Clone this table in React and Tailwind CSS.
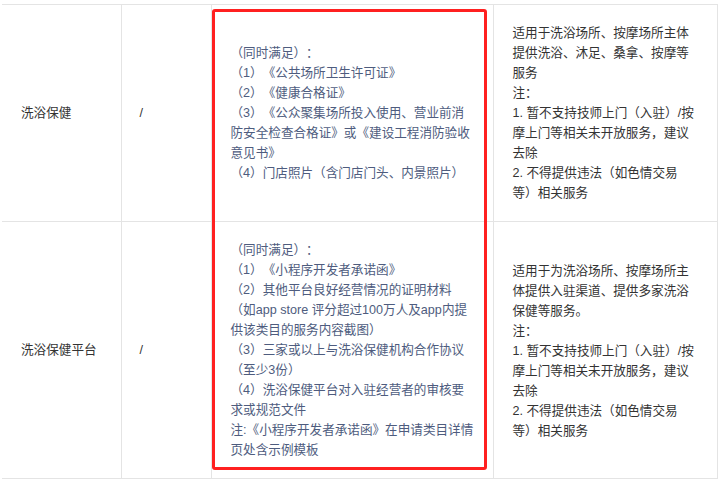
import React from 'react';

const rows = [
  {
    name: '洗浴保健',
    tag: '/',
    height: 'h-[217px]',
    docs: [
      '（同时满足）：',
      '（1）《公共场所卫生许可证》',
      '（2）《健康合格证》',
      '（3）《公众聚集场所投入使用、营业前消',
      '防安全检查合格证》或《建设工程消防验收',
      '意见书》',
      '（4）门店照片（含门店门头、内景照片）',
    ],
    scope: [
      '适用于洗浴场所、按摩场所主体',
      '提供洗浴、沐足、桑拿、按摩等',
      '服务',
      '注：',
      '1. 暂不支持技师上门（入驻）/按',
      '摩上门等相关未开放服务，建议',
      '去除',
      '2. 不得提供违法（如色情交易',
      '等）相关服务',
    ],
  },
  {
    name: '洗浴保健平台',
    tag: '/',
    height: 'h-[257px]',
    docs: [
      '（同时满足）：',
      '（1）《小程序开发者承诺函》',
      '（2）其他平台良好经营情况的证明材料',
      '（如app store 评分超过100万人及app内提',
      '供该类目的服务内容截图）',
      '（3）三家或以上与洗浴保健机构合作协议',
      '（至少3份）',
      '（4）洗浴保健平台对入驻经营者的审核要',
      '求或规范文件',
      '注:《小程序开发者承诺函》在申请类目详情',
      '页处含示例模板',
    ],
    scope: [
      '适用于为洗浴场所、按摩场所主',
      '体提供入驻渠道、提供多家洗浴',
      '保健等服务。',
      '注：',
      '1. 暂不支持技师上门（入驻）/按',
      '摩上门等相关未开放服务，建议',
      '去除',
      '2. 不得提供违法（如色情交易',
      '等）相关服务',
    ],
  },
];

function Lines({ items }) {
  return items.map((t, i) => (
    <div key={i} className="whitespace-nowrap">{t}</div>
  ));
}

export default function App() {
  return (
    <div className="w-[718px] h-[481px] bg-white overflow-hidden pt-[4px] pl-[2px] font-['Liberation_Sans','Noto_Sans_CJK_SC',sans-serif] text-[12.6px] leading-[20px] text-[#333] [text-spacing-trim:space-all]">
      <div className="relative w-[715px]">
        <table className="border-collapse table-fixed w-[715px]">
          <colgroup>
            <col className="w-[119px]" />
            <col className="w-[90px]" />
            <col className="w-[282px]" />
            <col className="w-[224px]" />
          </colgroup>
          <tbody>
            {rows.map((r) => (
              <tr key={r.name} className={r.height}>
                <td className="border-y border-[#e4e4e4] pl-[19px] align-middle">{r.name}</td>
                <td className="border border-[#e4e4e4] pl-[18px] align-middle">{r.tag}</td>
                <td className="border border-[#e4e4e4] pl-[19px] align-middle text-[#4e5c7e]">
                  <Lines items={r.docs} />
                </td>
                <td className="border border-[#e4e4e4] pl-[19px] align-middle">
                  <div className={r.name === '洗浴保健' ? 'mt-[-1px]' : 'mt-[1px]'}>
                    <Lines items={r.scope} />
                  </div>
                </td>
              </tr>
            ))}
          </tbody>
        </table>
        {/* red highlight annotation */}
        <div className="absolute left-[210px] top-[5px] w-[275px] h-[461px] border-[3px] border-[#ff2020] rounded-[3px] pointer-events-none" />
      </div>
    </div>
  );
}
